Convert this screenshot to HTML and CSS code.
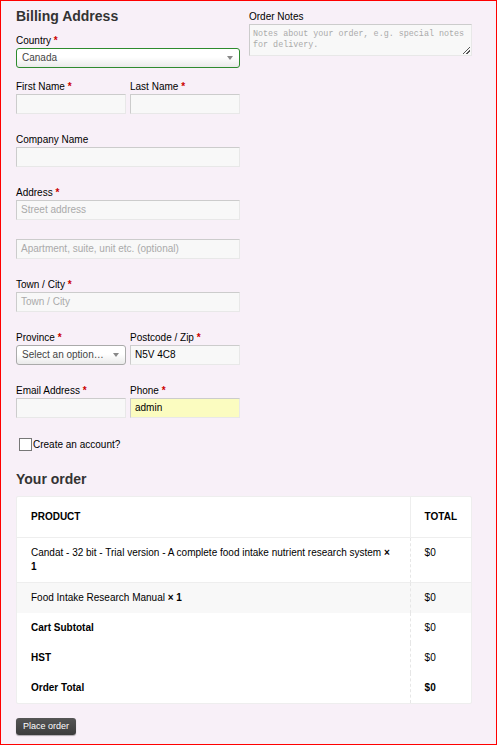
FILE: index.html
```html
<!DOCTYPE html>
<html>
<head>
<meta charset="utf-8">
<link rel="stylesheet" href="styles.css">
</head>
<body>
<div class="page">
  <div class="cols">
    <div class="col">
      <h3 class="title">Billing Address</h3>
      <div class="row row-country">
        <label class="lbl">Country <abbr class="req">*</abbr></label>
        <div class="select select-focus"><span>Canada</span><span class="arrow"></span></div>
      </div>
      <div class="pair">
        <div class="row">
          <label class="lbl">First Name <abbr class="req">*</abbr></label>
          <div class="input"></div>
        </div>
        <div class="row">
          <label class="lbl">Last Name <abbr class="req">*</abbr></label>
          <div class="input"></div>
        </div>
      </div>
      <div class="row">
        <label class="lbl">Company Name</label>
        <div class="input"></div>
      </div>
      <div class="row">
        <label class="lbl">Address <abbr class="req">*</abbr></label>
        <div class="input placeholder">Street address</div>
      </div>
      <div class="row">
        <div class="input placeholder">Apartment, suite, unit etc. (optional)</div>
      </div>
      <div class="row">
        <label class="lbl">Town / City <abbr class="req">*</abbr></label>
        <div class="input placeholder">Town / City</div>
      </div>
      <div class="pair">
        <div class="row">
          <label class="lbl">Province <abbr class="req">*</abbr></label>
          <div class="select"><span>Select an option…</span><span class="arrow"></span></div>
        </div>
        <div class="row">
          <label class="lbl">Postcode / Zip <abbr class="req">*</abbr></label>
          <div class="input">N5V 4C8</div>
        </div>
      </div>
      <div class="pair">
        <div class="row">
          <label class="lbl">Email Address <abbr class="req">*</abbr></label>
          <div class="input"></div>
        </div>
        <div class="row">
          <label class="lbl">Phone <abbr class="req">*</abbr></label>
          <div class="input autofill">admin</div>
        </div>
      </div>
      <div class="check-row">
        <span class="checkbox"></span><span>Create an account?</span>
      </div>
    </div>
    <div class="col">
      <label class="lbl notes-lbl">Order Notes</label>
      <div class="textarea">Notes about your order, e.g. special notes for delivery.<span class="grip"></span></div>
    </div>
  </div>

  <h3 class="title order-title">Your order</h3>
  <table class="order">
    <thead>
      <tr><th class="c-prod">Product</th><th class="c-tot">Total</th></tr>
    </thead>
    <tbody>
      <tr class="item"><td class="c-prod">Candat - 32 bit - Trial version - A complete food intake nutrient research system <strong>×</strong> <strong>1</strong></td><td class="c-tot">$0</td></tr>
      <tr class="item alt"><td class="c-prod">Food Intake Research Manual <strong>× 1</strong></td><td class="c-tot">$0</td></tr>
    </tbody>
    <tfoot>
      <tr><th class="c-prod">Cart Subtotal</th><td class="c-tot">$0</td></tr>
      <tr><th class="c-prod">HST</th><td class="c-tot">$0</td></tr>
      <tr><th class="c-prod">Order Total</th><td class="c-tot"><strong>$0</strong></td></tr>
    </tfoot>
  </table>
  <button class="btn">Place order</button>
</div>
</body>
</html>
```

FILE: styles.css
```css
html, body {
  margin: 0;
  padding: 0;
}
body {
  font-family: "Liberation Sans", Arial, sans-serif;
  font-size: 10px;
  color: #000;
}
.page {
  box-sizing: border-box;
  height: 745px;
  border: 1px solid #ff0000;
  background: #f8f0f8;
  padding: 5px 24px 0 15px;
}
.cols {
  display: grid;
  grid-template-columns: 224px 223px;
  column-gap: 9px;
}
.col {
  display: flex;
  flex-direction: column;
}
.title {
  margin: 0;
  font-size: 14px;
  line-height: 20px;
  font-weight: bold;
  color: #333;
}
.row {
  display: flex;
  flex-direction: column;
  margin-bottom: 19px;
}
.row-country {
  margin-top: 8px;
  margin-bottom: 12px;
}
.lbl {
  display: block;
  line-height: 13px;
  margin-bottom: 1px;
}
.req {
  color: #c00;
  font-weight: bold;
  text-decoration: none;
  border: 0;
}
.pair {
  display: grid;
  grid-template-columns: 110px 110px;
  column-gap: 4px;
}
.pair .row {
  min-width: 0;
}
.input {
  box-sizing: border-box;
  height: 20px;
  border: 1px solid;
  border-color: #ccc #e8e8e8 #e8e8e8 #ccc;
  background: #f8f8f8;
  padding: 0 4px;
  line-height: 18px;
  color: #000;
  white-space: nowrap;
  overflow: hidden;
}
.placeholder {
  color: #aaa;
}
.autofill {
  background: #fbfcc0;
}
.select {
  box-sizing: border-box;
  height: 20px;
  border: 1px solid #aaa;
  border-radius: 3px;
  background: linear-gradient(#fff 0%, #fff 45%, #eaeaea 100%);
  padding: 0 6px 0 5px;
  line-height: 18px;
  color: #444;
  display: flex;
  justify-content: space-between;
  align-items: center;
}
.select-focus {
  border-color: #2e8b2e;
}
.arrow {
  width: 0;
  height: 0;
  border-left: 3px solid transparent;
  border-right: 3px solid transparent;
  border-top: 4px solid #888;
}
.check-row {
  display: flex;
  align-items: center;
  margin-top: 1px;
  padding-left: 3px;
  line-height: 13px;
}
.checkbox {
  box-sizing: border-box;
  width: 13px;
  height: 13px;
  border: 1px solid #777;
  background: #fff;
  margin-right: 1px;
}
.notes-lbl {
  margin-top: 4px;
}
.textarea {
  position: relative;
  box-sizing: border-box;
  height: 32px;
  border: 1px solid;
  border-color: #ccc #e8e8e8 #e8e8e8 #ccc;
  background: #f8f8f8;
  padding: 4px 3px;
  font-family: "Liberation Mono", "Courier New", monospace;
  font-size: 8.4px;
  line-height: 11px;
  color: #aaa;
}
.grip {
  position: absolute;
  right: 1px;
  bottom: 1px;
  width: 7px;
  height: 7px;
  background: linear-gradient(135deg, transparent 45%, #555 45%, #555 55%, transparent 55%, transparent 70%, #555 70%, #555 80%, transparent 80%);
}
.order-title {
  margin-top: 18px;
  margin-bottom: 7px;
}
.order {
  width: 456px;
  border-collapse: separate;
  border-spacing: 0;
  background: #fff;
  border: 1px solid #eee;
  border-radius: 2px;
  margin-bottom: 14px;
}
.order th, .order td {
  text-align: left;
  padding: 8px 14px;
  line-height: 14px;
  vertical-align: top;
}
.order thead th {
  text-transform: uppercase;
  padding: 13px 14px;
  border-bottom: 1px solid #eee;
}
.order .c-tot {
  width: 32px;
  border-left: 1px dashed #e6e6e6;
}
.order thead .c-tot {
  border-left: 1px solid #eee;
}
.order .item td {
  border-bottom: 1px solid #eee;
}
.order .item:first-child td {
  padding-top: 8px;
  padding-bottom: 8px;
}
.order .alt td {
  background: #f8f8f8;
  border-bottom: 0;
}
.order tfoot th, .order tfoot td {
  padding-top: 8px;
  padding-bottom: 8px;
}
.btn {
  display: block;
  font-family: "Liberation Sans", Arial, sans-serif;
  font-size: 9px;
  color: #fff;
  background: linear-gradient(#555, #3c3c3c);
  border: 0;
  border-radius: 3px;
  padding: 0 7px;
  height: 17px;
  line-height: 17px;
  box-shadow: 0 1px 1px rgba(0,0,0,0.3);
}
```
